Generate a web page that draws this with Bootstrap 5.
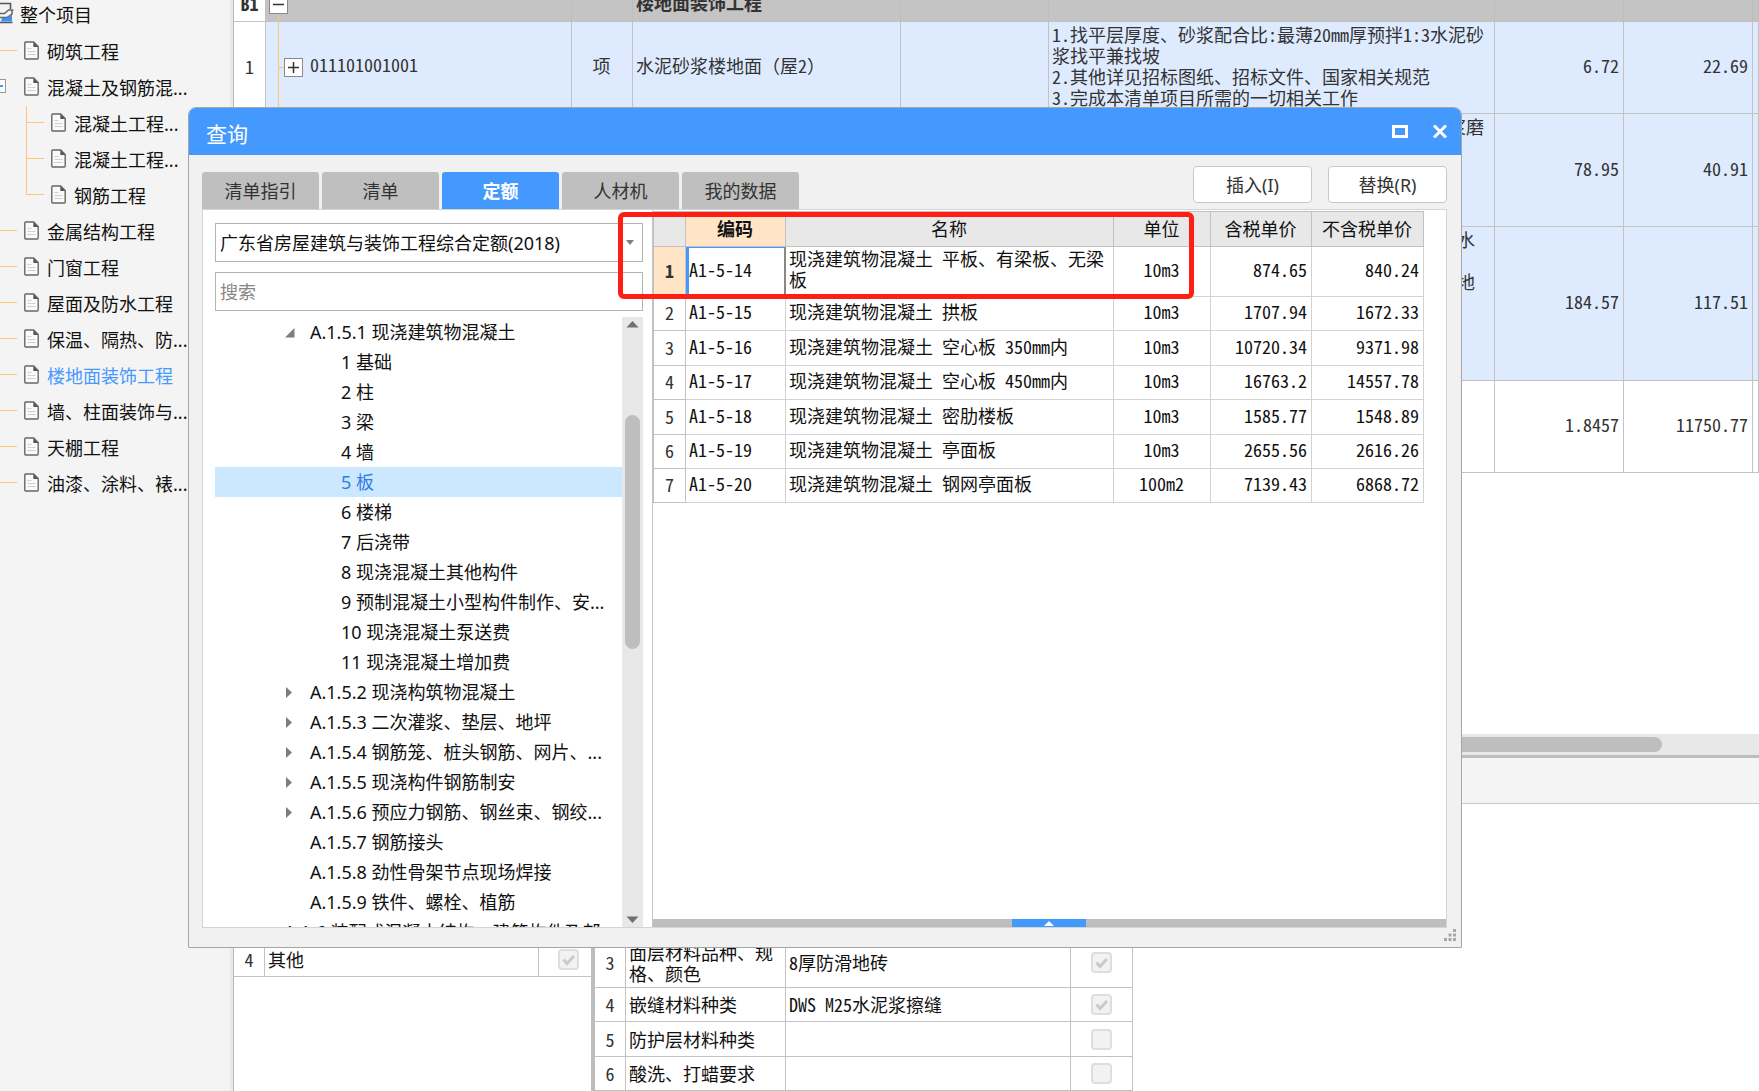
<!DOCTYPE html>
<html lang="zh-CN">
<head>
<meta charset="utf-8">
<meta name="viewport" content="width=device-width, initial-scale=1">
<title>查询</title>
<link rel="stylesheet" href="https://cdn.jsdelivr.net/npm/bootstrap@5.3.0/dist/css/bootstrap.min.css">
<style>
  :root { --ui: "Noto Sans", "Noto Sans CJK SC", sans-serif; --grid: "Noto Sans CJK SC", sans-serif; --blue: #4499ff; --tree: #ffc477; }
  body { font-family: var(--ui); font-size: 18px; line-height: 24px; color: #111; background: #fff; }
  ul { list-style: none; margin: 0; padding: 0; }
  button, select, input { font: inherit; }

  /* project tree */
  .side { flex: 0 0 233px; background: #f4f4f4; border-right: 3px solid #e9e9e9; }
  .side a { color: #111; text-decoration: none; display: flex; align-items: center; height: 36px; padding-left: 24px; gap: 8px; white-space: nowrap; }
  .side a svg { flex: none; margin-bottom: 4px; }
  .side .root-link { height: 34px; padding: 0 0 4px 0; gap: 6px; }
  .side .stem { background: linear-gradient(var(--tree), var(--tree)) 0 16px / 17px 1px no-repeat; }
  .side .picked { color: var(--blue); }
  .side ul ul { padding-left: 26px; }
  .side ul ul a { padding-left: 25px; background: linear-gradient(var(--tree), var(--tree)) 0 0 / 1px 100% no-repeat, linear-gradient(var(--tree), var(--tree)) 0 16px / 18px 1px no-repeat; }
  .side ul ul li:last-child a { background-size: 1px 16px, 18px 1px; }
  .side .fold { width: 6px; height: 14px; border: 1px solid #999; border-left: 0; background: linear-gradient(var(--blue), var(--blue)) 0 5px / 3px 2px no-repeat #fff; margin: 0 10px 4px 0; padding: 0; }
  .side .parent-link { padding-left: 0; }

  /* data grids */
  .sheet { border-collapse: separate; border-spacing: 0; table-layout: fixed; font-family: var(--grid); font-feature-settings: "hwid"; line-height: 21px; }
  .sheet th, .sheet td { border: 0 solid #c2c2c2; border-width: 0 1px 1px 0; padding: 0 4px 0 3px; overflow: hidden; font-weight: 400; white-space: nowrap; }
  .sheet .num { text-align: right; }
  .sheet .mid { text-align: center; }
  .sheet tbody th { text-align: center; padding: 0; background: #fff; color: #333; }
  .sheet .wide { font-feature-settings: normal; }
  .bills td, .rates td { padding-bottom: 4px; }
  .bills tbody th, .rates tbody th { padding-bottom: 2px; }
  .bills { width: 100%; margin-top: -12px; border-left: 1px solid #b8b8b8; color: #333; }
  .bills .blue-row td { background-color: #deebff; }
  .bills .total-row td { background-color: #c4c4c4; border-right-color: #bdbdbd; }
  .bills .total-row > * { font-weight: 700; }
  .bills .text-cell { vertical-align: top; padding-top: 2px; padding-bottom: 0; }
  .bills .code { background-image: linear-gradient(var(--tree), var(--tree)), linear-gradient(var(--tree), var(--tree)); background-repeat: no-repeat; background-position: 12px 0, 12px 50%; background-size: 1px 100%, 8px 1px; padding-left: 18px; }
  .bills .total-row .code { padding-left: 3px; }
  .knob { width: 19px; height: 19px; padding: 0; border: 1px solid #8a8a8a; background: #fff; display: inline-flex; align-items: center; justify-content: center; vertical-align: middle; margin-right: 7px; }
  .bills-view { flex: 0 0 734px; }
  .hbar { height: 21px; background: #e8e8e8; padding: 3px 97px 3px 20px; }
  .hbar div { height: 15px; border-radius: 8px; background: #bebebe; }
  .strip { height: 49px; background: #f4f4f4; border-top: 3px solid #bdbdbd; border-bottom: 1px solid #c8c8c8; }
  .props-left { flex: 0 0 358px; border-left: 1px solid #b8b8b8; }
  .props-left .sheet { width: 366px; }
  .props-right { border-left: 4px solid #bdbdbd; }
  .props-right .sheet { width: 538px; }
  .h34 { height: 34px; } .h35 { height: 35px; } .h50 { height: 50px; }
  .tick { appearance: none; display: block; width: 21px; height: 21px; margin: 0 auto; border: 2px solid #dedede; border-radius: 4px; background: #f2f2f2; }
  .tick:checked { background: #f2f2f2 url("data:image/svg+xml,%3Csvg xmlns='http://www.w3.org/2000/svg' viewBox='0 0 17 17'%3E%3Cpath d='M3.5 8.5l3.5 4 7-7.500' fill='none' stroke='%23cacaca' stroke-width='3'/%3E%3C/svg%3E") center / 17px no-repeat; }

  /* query window */
  .query { position: absolute; top: 107px; left: 188px; right: 297px; bottom: 143px; background: #f1f1f1; border: 1px solid #a6a6a6; border-radius: 8px 8px 0 0; overflow: hidden; }
  .query-title { height: 47px; background: var(--blue); color: #fff; padding: 0 13px 0 17px; }
  .query-title h1 { font-size: 21px; line-height: 30px; margin: 4px 0 0; font-weight: 400; }
  .query-title button { border: 0; background: none; padding: 0; line-height: 0; }
  .query-tools { padding: 11px 14px 0 13px; height: 54px; }
  .query-tabs { gap: 3px; }
  .query-tabs button { width: 117px; height: 37px; border: 0; border-radius: 3px 3px 0 0; background: #bfbfbf; color: #333; padding: 0; }
  .query-tabs .active { background: var(--blue); color: #fff; font-weight: 700; }
  .act { width: 119px; height: 37px; border: 1px solid #c8c8c8; border-radius: 4px; background: #fff; color: #333; padding: 0; }
  .query-body { margin: 0 14px 19px 13px; border: 1px solid #d4d4d4; background: #fff; min-height: 0; }
  .finder { flex: 0 0 449px; padding: 13px 9px 0 12px; min-height: 0; }
  .field { width: 428px; height: 39px; border: 1px solid #b4b4b4; border-radius: 0; background: #fff; padding: 0 4px; color: #111; appearance: none; margin-bottom: 10px; flex: none; }
  select.field { background: #fff url("data:image/svg+xml,%3Csvg xmlns='http://www.w3.org/2000/svg' viewBox='0 0 8 5'%3E%3Cpath d='M0 0h8L4 5z' fill='%23808080'/%3E%3C/svg%3E") right 8px center / 8px 5px no-repeat; }
  .field::placeholder { color: #888; opacity: 1; }
  .quota { min-height: 0; margin-top: -4px; }
  .quota-list { overflow: hidden; padding-right: 10px; }
  .quota-list li { height: 30px; display: flex; align-items: center; white-space: nowrap; line-height: 30px; padding-left: 126px; margin-right: -10px; }
  .quota-list li svg { flex: none; width: 10px; height: 11px; margin: 0 15px 0 1px; }
  .quota-list .lv1 { padding-left: 69px; }
  .quota-list .lv2 { padding-left: 95px; }
  .quota-list .picked { background: #cce8ff; color: #2f7de8; }
  .vbar { flex: 0 0 21px; background: #e8e8e8; padding: 4px 3px; }
  .vbar .thumb { height: 234px; border-radius: 8px; background: #bebebe; margin-top: 87px; }
  .result { min-width: 0; border-left: 1px solid #c4c4c4; }
  .rates { width: 771px; border-left: 1px solid #c0c0c0; border-top: 1px solid #c0c0c0; margin-top: 1px; color: #111; }
  .rates td { border-color: #d2d2d2; }
  .rates thead th { background: #e8e8e8; text-align: center; height: 35px; padding-bottom: 2px; }
  .rates thead .hot, .rates tbody .hot { background: #ffe5c6; font-weight: 700; }
  .rates .cell-on { border: solid; border-width: 1px 2px 2px 3px; border-color: var(--blue) #888 #888 var(--blue); padding: 0 1px 4px 0; }
  .rates .wrap-cell { white-space: normal; vertical-align: top; padding-top: 1px; }
  .pull { height: 8px; background: #bebebe; }
  .pull button { width: 74px; height: 8px; border: 0; padding: 0; background: var(--blue); display: flex; align-items: center; justify-content: center; margin-left: 359px; }
  .grip { position: absolute; right: 4px; bottom: 5px; }
  .frame { position: absolute; left: 618px; top: 212px; width: 576px; height: 87px; border: 5px solid #ff1f12; border-radius: 6px; pointer-events: none; }
</style>
<script src="https://cdn.jsdelivr.net/npm/bootstrap@5.3.0/dist/js/bootstrap.bundle.min.js"></script>
</head>
<body class="vh-100 overflow-hidden position-relative">
<svg width="0" height="0" class="position-absolute">
  <defs>
    <symbol id="doc" viewBox="0 0 15 19">
      <path d="M1.700 1h8l4.500 4.500v11.500a1 1 0 0 1-1 1H1.700a1 1 0 0 1-.9-1V2a1 1 0 0 1 .9-1z" fill="#fafafa" stroke="#666" stroke-width="1.400"/>
      <path d="M9.300 1v5h5z" fill="#555"/>
      <path d="M3.500 7.500h4M3.500 10.500h8M3.500 13.500h8" stroke="#d0d0d0" stroke-width="1"/>
    </symbol>
    <symbol id="shut" viewBox="0 0 10 11"><path d="M1 0v11L7 5.500z" fill="#7d7d7d"/></symbol>
    <symbol id="opened" viewBox="0 0 10 11"><path d="M9.500 1v9.500H0z" fill="#7d7d7d"/></symbol>
  </defs>
</svg>

<div class="d-flex h-100">
  <nav class="side overflow-hidden" aria-label="项目">
    <a class="root-link" href="#">
      <svg width="14" height="22" viewBox="0 0 14 22"><path d="M0 1.500h10.500V7M0 20.500h12.500" fill="none" stroke="#555" stroke-width="1.600"/><path d="M0 11.500h4.500l4-3.500h5M12 8v4l-5 3.500H0" fill="none" stroke="#666" stroke-width="1.500"/><path d="M1 19.500l1-3.500h5l4-3h1v6.500z" fill="#3d8ff0"/></svg>整个项目</a>
    <ul>
      <li><a class="stem" href="#"><svg width="15" height="19"><use href="#doc"/></svg>砌筑工程</a></li>
      <li><a class="parent-link" href="#"><span class="fold"></span><svg width="15" height="19"><use href="#doc"/></svg>混凝土及钢筋混...</a>
        <ul>
          <li><a href="#"><svg width="15" height="19"><use href="#doc"/></svg>混凝土工程...</a></li>
          <li><a href="#"><svg width="15" height="19"><use href="#doc"/></svg>混凝土工程...</a></li>
          <li><a href="#"><svg width="15" height="19"><use href="#doc"/></svg>钢筋工程</a></li>
        </ul></li>
      <li><a class="stem" href="#"><svg width="15" height="19"><use href="#doc"/></svg>金属结构工程</a></li>
      <li><a class="stem" href="#"><svg width="15" height="19"><use href="#doc"/></svg>门窗工程</a></li>
      <li><a class="stem" href="#"><svg width="15" height="19"><use href="#doc"/></svg>屋面及防水工程</a></li>
      <li><a class="stem" href="#"><svg width="15" height="19"><use href="#doc"/></svg>保温、隔热、防...</a></li>
      <li><a class="stem picked" href="#"><svg width="15" height="19"><use href="#doc"/></svg>楼地面装饰工程</a></li>
      <li><a class="stem" href="#"><svg width="15" height="19"><use href="#doc"/></svg>墙、柱面装饰与...</a></li>
      <li><a class="stem" href="#"><svg width="15" height="19"><use href="#doc"/></svg>天棚工程</a></li>
      <li><a class="stem" href="#"><svg width="15" height="19"><use href="#doc"/></svg>油漆、涂料、裱...</a></li>
    </ul>
  </nav>

  <main class="flex-grow-1 d-flex flex-column overflow-hidden">
    <div class="bills-view overflow-hidden">
      <table class="sheet bills">
        <colgroup><col style="width:32px"><col style="width:306px"><col style="width:61px"><col style="width:268px"><col style="width:148px"><col style="width:446px"><col style="width:129px"><col style="width:129px"><col></colgroup>
        <tbody>
          <tr class="total-row h34"><th>B1</th><td class="code"><button class="knob" aria-label="折叠"><svg width="11" height="11"><path d="M0 5.500h11" stroke="#333" stroke-width="1.500"/></svg></button></td><td></td><td>楼地面装饰工程</td><td></td><td></td><td></td><td></td><td></td></tr>
          <tr class="blue-row" style="height:92px"><th>1</th><td class="code"><button class="knob" aria-label="展开"><svg width="11" height="11"><path d="M0 5.500h11M5.500 0v11" stroke="#333" stroke-width="1.500"/></svg></button>011101001001</td><td class="mid">项</td><td>水泥砂浆楼地面<span class="wide">（</span>屋2<span class="wide">）</span></td><td></td><td class="text-cell">1.找平层厚度、砂浆配合比:最薄20mm厚预拌1:3水泥砂<br>浆找平兼找坡<br>2.其他详见招标图纸、招标文件、国家相关规范<br>3.完成本清单项目所需的一切相关工作</td><td class="num">6.72</td><td class="num">22.69</td><td></td></tr>
          <tr class="blue-row" style="height:113px"><th>2</th><td class="code"></td><td></td><td></td><td></td><td class="text-cell">1.面层厚度、砂浆配合比:20mm厚预拌1:2.5水泥砂浆磨<br>光</td><td class="num">78.95</td><td class="num">40.91</td><td></td></tr>
          <tr class="blue-row" style="height:154px"><th>3</th><td class="code"></td><td></td><td></td><td></td><td class="text-cell">1.找平层厚度、砂浆配合比20mm厚1:2.5干硬性预拌水<br>泥砂浆<br>2.面层材料品种、规格、颜色8厚防滑地砖铺贴室内地<br>面</td><td class="num">184.57</td><td class="num">117.51</td><td></td></tr>
          <tr style="height:92px"><th>4</th><td class="code"></td><td></td><td></td><td></td><td></td><td class="num">1.8457</td><td class="num">11750.77</td><td></td></tr>
        </tbody>
      </table>
    </div>
    <div class="hbar flex-shrink-0"><div></div></div>
    <div class="strip flex-shrink-0"></div>
    <div class="d-flex flex-grow-1 overflow-hidden">
      <section class="props-left overflow-hidden">
        <table class="sheet">
          <colgroup><col style="width:31px"><col><col style="width:61px"></colgroup>
          <tbody>
            <tr class="h34"><th></th><td>工作内容</td><td></td></tr>
            <tr class="h35"><th>1</th><td>基层清理</td><td><input class="tick" type="checkbox" checked disabled aria-label="基层清理"></td></tr>
            <tr class="h34"><th>2</th><td>抹找平层</td><td><input class="tick" type="checkbox" checked disabled aria-label="抹找平层"></td></tr>
            <tr class="h35"><th>3</th><td>面层铺设</td><td><input class="tick" type="checkbox" checked disabled aria-label="面层铺设"></td></tr>
            <tr class="h35"><th>4</th><td>其他</td><td><input class="tick" type="checkbox" checked disabled aria-label="其他"></td></tr>
          </tbody>
        </table>
      </section>
      <section class="props-right flex-grow-1">
        <table class="sheet">
          <colgroup><col style="width:31px"><col style="width:160px"><col><col style="width:62px"></colgroup>
          <tbody>
            <tr class="h34"><th></th><td>特征</td><td>特征值</td><td></td></tr>
            <tr class="h50"><th>1</th><td>找平层厚度</td><td></td><td></td></tr>
            <tr class="h50"><th>2</th><td>结合层厚度</td><td></td><td></td></tr>
            <tr class="h50"><th>3</th><td>面层材料品种、规<br>格、颜色</td><td>8厚防滑地砖</td><td><input class="tick" type="checkbox" checked disabled aria-label="面层材料"></td></tr>
            <tr class="h34"><th>4</th><td>嵌缝材料种类</td><td>DWS M25水泥浆擦缝</td><td><input class="tick" type="checkbox" checked disabled aria-label="嵌缝材料"></td></tr>
            <tr class="h35"><th>5</th><td>防护层材料种类</td><td></td><td><input class="tick" type="checkbox" disabled aria-label="防护层材料"></td></tr>
            <tr class="h34"><th>6</th><td>酸洗、打蜡要求</td><td></td><td><input class="tick" type="checkbox" disabled aria-label="酸洗"></td></tr>
          </tbody>
        </table>
      </section>
    </div>
  </main>
</div>

<div class="query d-flex flex-column" role="dialog" aria-label="查询">
  <header class="query-title d-flex align-items-center flex-shrink-0">
    <h1 class="me-auto">查询</h1>
    <button class="me-4" aria-label="最大化"><svg width="16" height="13"><path d="M1.500 1.500h13v10h-13z" fill="none" stroke="#fff" stroke-width="3"/></svg></button>
    <button aria-label="关闭"><svg width="16" height="13"><path d="M2 .5l12 12M14 .5l-12 12" stroke="#fff" stroke-width="3"/></svg></button>
  </header>
  <div class="query-tools d-flex flex-shrink-0 align-items-start">
    <div class="query-tabs d-flex align-self-end me-auto" role="tablist">
      <button role="tab">清单指引</button><button role="tab">清单</button><button role="tab" class="active">定额</button><button role="tab">人材机</button><button role="tab">我的数据</button>
    </div>
    <div class="d-flex gap-3">
      <button class="act">插入(I)</button><button class="act">替换(R)</button>
    </div>
  </div>
  <div class="query-body d-flex flex-grow-1">
    <div class="finder d-flex flex-column">
      <select class="field" aria-label="定额库"><option>广东省房屋建筑与装饰工程综合定额(2018)</option></select>
      <input class="field" type="text" placeholder="搜索" aria-label="搜索">
      <div class="quota d-flex flex-grow-1">
        <ul class="quota-list flex-grow-1">
          <li class="lv1"><svg><use href="#opened"/></svg>A.1.5.1 现浇建筑物混凝土</li>
          <li>1 基础</li>
          <li>2 柱</li>
          <li>3 梁</li>
          <li>4 墙</li>
          <li class="picked">5 板</li>
          <li>6 楼梯</li>
          <li>7 后浇带</li>
          <li>8 现浇混凝土其他构件</li>
          <li>9 预制混凝土小型构件制作、安...</li>
          <li>10 现浇混凝土泵送费</li>
          <li>11 现浇混凝土增加费</li>
          <li class="lv1"><svg><use href="#shut"/></svg>A.1.5.2 现浇构筑物混凝土</li>
          <li class="lv1"><svg><use href="#shut"/></svg>A.1.5.3 二次灌浆、垫层、地坪</li>
          <li class="lv1"><svg><use href="#shut"/></svg>A.1.5.4 钢筋笼、桩头钢筋、网片、...</li>
          <li class="lv1"><svg><use href="#shut"/></svg>A.1.5.5 现浇构件钢筋制安</li>
          <li class="lv1"><svg><use href="#shut"/></svg>A.1.5.6 预应力钢筋、钢丝束、钢绞...</li>
          <li class="lv2">A.1.5.7 钢筋接头</li>
          <li class="lv2">A.1.5.8 劲性骨架节点现场焊接</li>
          <li class="lv2">A.1.5.9 铁件、螺栓、植筋</li>
          <li class="lv1">A.1.6 装配式混凝土结构、建筑构件及部...</li>
        </ul>
        <div class="vbar d-flex flex-column">
          <svg width="15" height="7" class="flex-shrink-0"><path d="M1.500 6.500h12L7.500 0z" fill="#6f6f78"/></svg>
          <div class="thumb flex-shrink-0"></div>
          <svg width="15" height="7" class="mt-auto flex-shrink-0"><path d="M1.500 .5h12L7.500 7z" fill="#6f6f78"/></svg>
        </div>
      </div>
    </div>
    <div class="result flex-grow-1 d-flex flex-column">
      <table class="sheet rates">
        <colgroup><col style="width:32px"><col style="width:100px"><col style="width:328px"><col style="width:97px"><col style="width:101px"><col style="width:112px"></colgroup>
        <thead><tr><th></th><th class="hot">编码</th><th>名称</th><th>单位</th><th>含税单价</th><th>不含税单价</th></tr></thead>
        <tbody>
          <tr class="h50"><th class="hot">1</th><td class="cell-on">A1-5-14</td><td class="wrap-cell">现浇建筑物混凝土 平板、有梁板、无梁板</td><td class="mid">10m3</td><td class="num">874.65</td><td class="num">840.24</td></tr>
          <tr class="h34"><th>2</th><td>A1-5-15</td><td>现浇建筑物混凝土 拱板</td><td class="mid">10m3</td><td class="num">1707.94</td><td class="num">1672.33</td></tr>
          <tr class="h35"><th>3</th><td>A1-5-16</td><td>现浇建筑物混凝土 空心板 350mm内</td><td class="mid">10m3</td><td class="num">10720.34</td><td class="num">9371.98</td></tr>
          <tr class="h34"><th>4</th><td>A1-5-17</td><td>现浇建筑物混凝土 空心板 450mm内</td><td class="mid">10m3</td><td class="num">16763.2</td><td class="num">14557.78</td></tr>
          <tr class="h35"><th>5</th><td>A1-5-18</td><td>现浇建筑物混凝土 密肋楼板</td><td class="mid">10m3</td><td class="num">1585.77</td><td class="num">1548.89</td></tr>
          <tr class="h34"><th>6</th><td>A1-5-19</td><td>现浇建筑物混凝土 亭面板</td><td class="mid">10m3</td><td class="num">2655.56</td><td class="num">2616.26</td></tr>
          <tr class="h34"><th>7</th><td>A1-5-20</td><td>现浇建筑物混凝土 钢网亭面板</td><td class="mid">100m2</td><td class="num">7139.43</td><td class="num">6868.72</td></tr>
        </tbody>
      </table>
      <div class="pull mt-auto"><button aria-label="展开面板"><svg width="10" height="5"><path d="M0 5h10L5 0z" fill="#fff"/></svg></button></div>
    </div>
  </div>
  <svg class="grip" width="13" height="13" fill="#a8a8a8"><path d="M9 0h3v3H9zM4.500 4.500h3v3h-3zM9 4.500h3v3H9zM0 9h3v3H0zM4.500 9h3v3h-3zM9 9h3v3H9z"/></svg>
</div>
<div class="frame"></div>
</body>
</html>
